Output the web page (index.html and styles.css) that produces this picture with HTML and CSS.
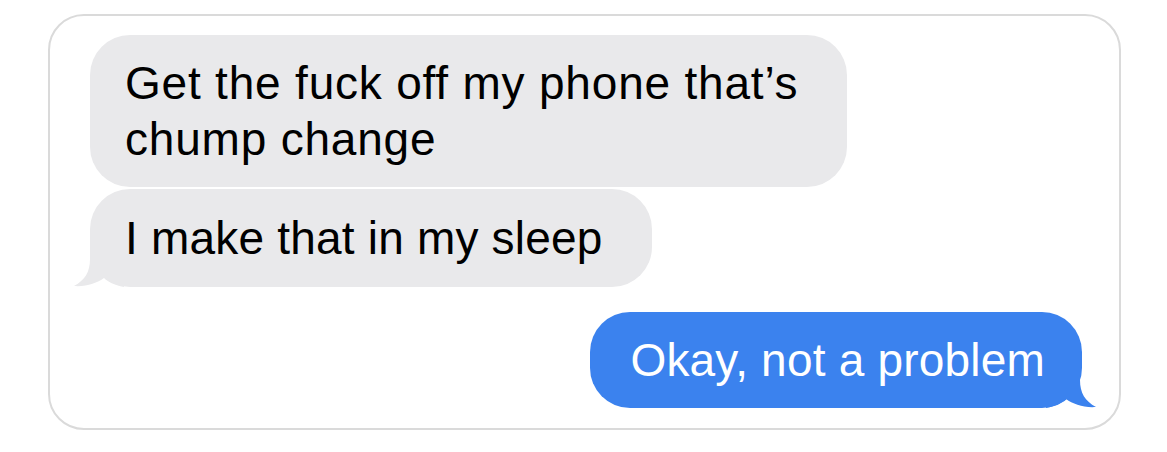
FILE: index.html
```html
<!DOCTYPE html>
<html lang="en">
<head>
<meta charset="utf-8">
<title>Messages</title>
<link rel="stylesheet" href="styles.css">
</head>
<body>
  <div class="card">
    <div class="thread">
      <div class="bubble received wide">Get the fuck off my phone that’s<br>chump change</div>
      <div class="bubble received last">I make that in my sleep
        <svg class="tail tail-left" width="50" height="50" viewBox="0 0 50 50"><path d="M16 0 L16 22 C16 35 11 43 0 49 C12 50 23 46 30 41 C34 45 40 48 50 50 L50 0 Z"/></svg>
      </div>
      <div class="bubble sent">Okay, not a problem
        <svg class="tail tail-right" width="50" height="50" viewBox="0 0 50 50"><path d="M16 0 L16 22 C16 35 11 43 0 49 C12 50 23 46 30 41 C34 45 40 48 50 50 L50 0 Z"/></svg>
      </div>
    </div>
  </div>
</body>
</html>
```
FILE: styles.css
```css
html, body {
  margin: 0;
  padding: 0;
  background: #ffffff;
}

body {
  width: 1167px;
  height: 452px;
  overflow: hidden;
  font-family: "Liberation Sans", Arial, sans-serif;
}

.card {
  box-sizing: border-box;
  margin: 14px 0 0 48px;
  width: 1073px;
  height: 416px;
  border: 2px solid #dadada;
  border-radius: 36px;
  padding: 19px 37px 0 40px;
}

.thread {
  display: flex;
  flex-direction: column;
  align-items: flex-start;
}

.bubble {
  position: relative;
  font-size: 46px;
  line-height: 56px;
  border-radius: 40px;
  padding: 20px 49px 20px 35px;
  white-space: nowrap;
}

.received {
  background: #e9e9eb;
  color: #000000;
  fill: #e9e9eb;
}

.wide {
  letter-spacing: 0.8px;
}

.last {
  margin-top: 2px;
  padding-top: 21px;
  padding-bottom: 21px;
  letter-spacing: 0.2px;
}

.sent {
  align-self: flex-end;
  margin-top: 25px;
  background: #3b82ee;
  color: #ffffff;
  fill: #3b82ee;
  padding: 20px 37px 20px 40px;
  letter-spacing: 0.2px;
}

.tail {
  position: absolute;
  bottom: 0;
}

.tail-left {
  left: -16px;
}

.tail-right {
  right: -14px;
  transform: scaleX(-1);
}
```
